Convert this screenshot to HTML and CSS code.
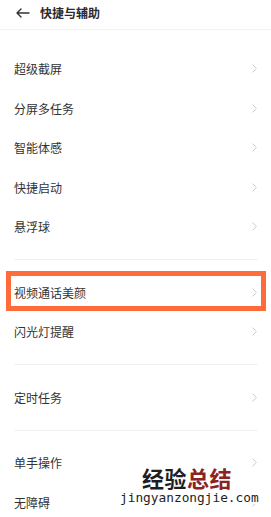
FILE: index.html
```html
<!DOCTYPE html>
<html lang="zh">
<head>
<meta charset="utf-8">
<link rel="stylesheet" href="styles.css">
</head>
<body>
<div class="page">
  <header class="header">
    <svg class="back" width="14" height="10" viewBox="0 0 14 10"><path d="M5 1 L1 5 L5 9 M1 5 H13" fill="none" stroke="#333" stroke-width="1.4" stroke-linecap="round" stroke-linejoin="round"/></svg>
    <span class="title">快捷与辅助</span>
  </header>
  <main class="list">
    <div class="group">
      <div class="row"><span>超级截屏</span><svg class="chev" width="5" height="9" viewBox="0 0 5 9"><path d="M0.6 0.6 L4.3 4.5 L0.6 8.4" fill="none" stroke="#c9c9c9" stroke-width="1"/></svg></div>
      <div class="row"><span>分屏多任务</span><svg class="chev" width="5" height="9" viewBox="0 0 5 9"><path d="M0.6 0.6 L4.3 4.5 L0.6 8.4" fill="none" stroke="#c9c9c9" stroke-width="1"/></svg></div>
      <div class="row"><span>智能体感</span><svg class="chev" width="5" height="9" viewBox="0 0 5 9"><path d="M0.6 0.6 L4.3 4.5 L0.6 8.4" fill="none" stroke="#c9c9c9" stroke-width="1"/></svg></div>
      <div class="row"><span>快捷启动</span><svg class="chev" width="5" height="9" viewBox="0 0 5 9"><path d="M0.6 0.6 L4.3 4.5 L0.6 8.4" fill="none" stroke="#c9c9c9" stroke-width="1"/></svg></div>
      <div class="row"><span>悬浮球</span><svg class="chev" width="5" height="9" viewBox="0 0 5 9"><path d="M0.6 0.6 L4.3 4.5 L0.6 8.4" fill="none" stroke="#c9c9c9" stroke-width="1"/></svg></div>
    </div>
    <div class="divider"></div>
    <div class="group">
      <div class="row highlighted"><span>视频通话美颜</span><svg class="chev" width="5" height="9" viewBox="0 0 5 9"><path d="M0.6 0.6 L4.3 4.5 L0.6 8.4" fill="none" stroke="#c9c9c9" stroke-width="1"/></svg></div>
      <div class="row"><span>闪光灯提醒</span><svg class="chev" width="5" height="9" viewBox="0 0 5 9"><path d="M0.6 0.6 L4.3 4.5 L0.6 8.4" fill="none" stroke="#c9c9c9" stroke-width="1"/></svg></div>
    </div>
    <div class="divider"></div>
    <div class="group">
      <div class="row"><span>定时任务</span><svg class="chev" width="5" height="9" viewBox="0 0 5 9"><path d="M0.6 0.6 L4.3 4.5 L0.6 8.4" fill="none" stroke="#c9c9c9" stroke-width="1"/></svg></div>
    </div>
    <div class="divider"></div>
    <div class="group">
      <div class="row"><span>单手操作</span><svg class="chev" width="5" height="9" viewBox="0 0 5 9"><path d="M0.6 0.6 L4.3 4.5 L0.6 8.4" fill="none" stroke="#c9c9c9" stroke-width="1"/></svg></div>
      <div class="row"><span>无障碍</span><svg class="chev" width="5" height="9" viewBox="0 0 5 9"><path d="M0.6 0.6 L4.3 4.5 L0.6 8.4" fill="none" stroke="#c9c9c9" stroke-width="1"/></svg></div>
    </div>
  </main>
  <div class="watermark">
    <div class="wm-big"><span class="wm-dark">经验</span><span class="wm-red">总结</span></div>
    <div class="wm-url">jingyanzongjie.com</div>
  </div>
</div>
</body>
</html>
```

FILE: styles.css
```css
html, body {
  margin: 0;
  padding: 0;
  background: #ffffff;
}
body {
  font-family: "Noto Sans CJK SC", "Noto Sans", sans-serif;
  color: #2e2e2e;
  width: 271px;
  height: 517px;
  overflow: hidden;
}
.page {
  position: relative;
  width: 271px;
  height: 517px;
  overflow: hidden;
}
.header {
  height: 26px;
  padding-bottom: 3px;
  border-bottom: 1px solid #f3f3f3;
  display: flex;
  align-items: center;
  padding-left: 16px;
}
.back {
  display: block;
  flex: none;
}
.title {
  margin-left: 10px;
  font-size: 12px;
  font-weight: 700;
  color: #2a2a2a;
  line-height: 1;
}
.list {
  padding-top: 19px;
}
.row {
  height: 39.5px;
  display: flex;
  align-items: center;
  justify-content: space-between;
  padding: 0 14px 0 14px;
  font-size: 12px;
  line-height: 1;
  color: #333333;
  position: relative;
}
.row span {
  display: block;
  padding-top: 1px;
}
.chev {
  display: block;
  flex: none;
}
.divider {
  height: 1px;
  background: #f1f1f1;
  margin: 12.5px 13px 12.5px 14px;
}
.highlighted::after {
  content: "";
  position: absolute;
  left: 6px;
  right: 5px;
  top: -2px;
  bottom: 1px;
  border: 5px solid #ff6b3b;
}
.watermark {
  position: absolute;
  left: 120px;
  top: 463px;
}
.wm-big {
  margin-left: 22px;
  font-size: 22px;
  font-weight: 700;
  line-height: 28px;
  letter-spacing: 0.5px;
}
.wm-dark {
  color: #1e1e1e;
}
.wm-red {
  color: #8c2323;
}
.wm-url {
  font-family: "DejaVu Sans Mono", "Liberation Mono", monospace;
  font-size: 12.8px;
  line-height: 13px;
  color: #1e1e1e;
  background: #ffffff;
}
```
